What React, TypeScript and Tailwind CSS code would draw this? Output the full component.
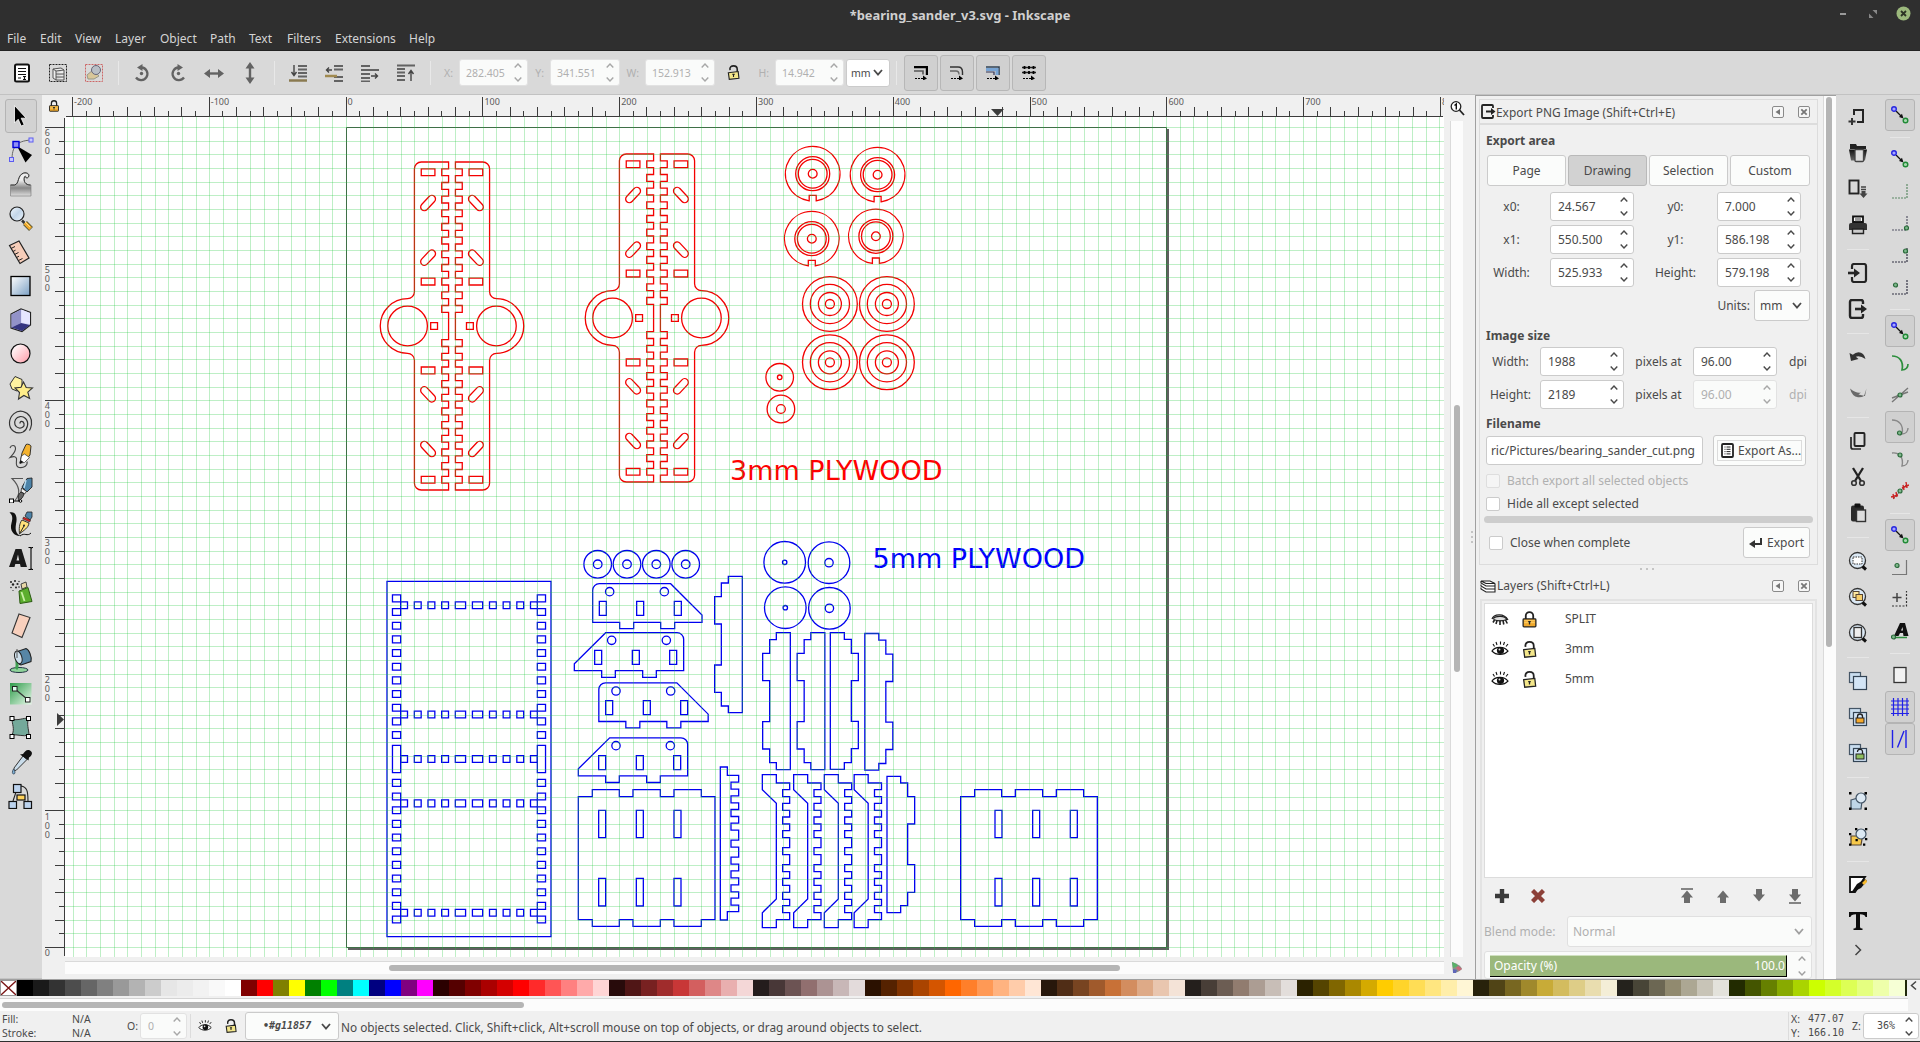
import React from "react";

type Kids = { children?: React.ReactNode };

/* ---------- small helpers ---------- */

function Ic({ w = 20, h, vb, children }: { w?: number; h?: number; vb?: string } & Kids) {
  const hh = h ?? w;
  return (
    <svg width={w} height={hh} viewBox={vb ?? `0 0 ${w} ${hh}`} className="block shrink-0" fill="none">
      {children}
    </svg>
  );
}

const Chev = ({ up = false, c = "#4a4a4a" }: { up?: boolean; c?: string }) => (
  <Ic w={8} h={5}>
    <path d={up ? "M.7 4.500 4 1 7.300 4.500" : "M.7 .5 4 4 7.300 .5"} stroke={c} strokeWidth="1.400" />
  </Ic>
);

const Drop = ({ c = "#4a4a4a" }: { c?: string }) => (
  <Ic w={10} h={7}>
    <path d="M1 1 5 5.600 9 1" stroke={c} strokeWidth="1.800" />
  </Ic>
);

function Spin({ v, cls, off = false, mono = false }: { v: string; cls: string; off?: boolean; mono?: boolean }) {
  const c = off ? "#a8a8a8" : "#4a4a4a";
  return (
    <div
      className={
        "flex shrink-0 items-center justify-between rounded-[3px] border pr-[5px] " +
        cls +
        (off ? " border-[#e2e2e2] bg-[#fafbfa] text-[#b0b0b0]" : " border-[#cbcbcb] bg-white") +
        (mono ? " font-['DejaVu_Sans_Mono'] text-[10px]" : "")
      }
    >
      <span>{v}</span>
      <span className="flex flex-col gap-[9px]">
        <Chev up c={c} />
        <Chev c={c} />
      </span>
    </div>
  );
}

/* ---------- lock and eye glyphs ---------- */

const Lock = ({ open = false, s = 16 }: { open?: boolean; s?: number }) => (
  <Ic w={s} vb="0 0 16 16">
    {open ? (
      <>
        <path d="M4.300 5.500C3.500 2 6 .9 8 .9c2.500 0 4 1.600 4 3.800V8" stroke="#222" strokeWidth="1.700" />
        <path d="M2.500 8.200 13 7l.8 7.200L3.500 15.300z" fill="#f3e68a" stroke="#222" strokeWidth="1.200" />
      </>
    ) : (
      <>
        <path d="M4.500 8V4.500a3.500 3.500 0 0 1 7 0V8" stroke="#222" strokeWidth="1.700" />
        <rect x="2" y="7.500" width="12" height="7.500" rx=".8" fill="#f0a92c" stroke="#222" strokeWidth="1.200" />
        <path d="M3 9.200H13M3 11h10" stroke="#ffd777" strokeWidth=".8" />
      </>
    )}
    <path d="M8 9.300v3.400M6.800 10h2.400" stroke="#222" strokeWidth="1.200" />
  </Ic>
);

const Eye = ({ s = 18 }: { s?: number }) => (
  <Ic w={s} vb="0 0 18 18">
    <path d="M1 11c3-4.500 12-5 16 0-4 4.500-12 4.500-16 0z" fill="#fff" stroke="#111" strokeWidth="1.200" />
    <circle cx="9.500" cy="10.500" r="3.600" fill="#111" />
    <circle cx="8.500" cy="9.500" r="1" fill="#ddd" />
    <path d="M3.500 6.500 2 4M6 5 5 2M9.500 4.500V1.500M12.500 5l1-3M15 6.500 17 4" stroke="#111" strokeWidth="1.100" />
  </Ic>
);

const EyeShut = () => (
  <Ic w={18}>
    <path d="M1 9c1.500-5 12-6.500 16 1" stroke="#222" strokeWidth="1.200" />
    <path d="M2 8.500c3-3 12-3 14 1-4 1.500-10 1.500-13.500 0" fill="#ddd" stroke="#222" strokeWidth="1.200" />
    <path d="M3.500 10 2 12.500M6 10.500 5 14M9 10.500V15M12 10.500l.8 4M14.500 10l1.800 3.500" stroke="#222" strokeWidth="1.600" />
  </Ic>
);

/* ---------- toolbox ---------- */

const toolIcons: React.ReactNode[] = [
  <path d="M6.500 2.500v17.500l3.700-3.700 3 6.700 3-1.300-3-6.500h5z" fill="#000" stroke="#fff" strokeWidth=".8" />,
  <>
    <path d="M4 23C4 10 8 4 23 3" stroke="#666" />
    <path d="M9 9l15 9-6.500 7.500z" fill="#000" />
    <rect x="5" y="4.500" width="6" height="6" fill="#8f8ff5" stroke="#0000d8" strokeWidth="1.400" />
    <rect x="21" y="1" width="4" height="4" fill="#c9c9ff" stroke="#5c5cf0" />
    <rect x="1.500" y="20.500" width="4" height="4" fill="#c9c9ff" stroke="#5c5cf0" />
  </>,
  <>
    <path d="M2.500 14h4c5-.5 2.500-9 8.500-11.500 3-1 6 0 5.500 3-.5 2.500-3 1.500-2.500 0-3 .5-2.500 8.500 3.500 8.500h1.500V25h-20.500z" fill="url(#toolGray)" stroke="#777" strokeWidth=".6" />
    <path d="M2.500 14h4c5-1 2.500-9.500 9-12 4-1 6.500 1.500 5 4-1.500 1.800-4 .3-3-1.200M22.500 14c-5 0-7.500-3.500-6-8.500" stroke="#333" />
  </>,
  <>
    <circle cx="9" cy="9" r="7" fill="url(#toolSky)" stroke="#222" strokeWidth="1.200" />
    <path d="M14 15.500 16.500 18" stroke="#333" strokeWidth="2.500" />
    <path d="m17 18 6 6" stroke="#553" strokeWidth="5.500" />
    <path d="m17 18 5.600 5.600" stroke="#f0a92c" strokeWidth="3.800" />
    <path d="m17 17 5 5" stroke="#ffe08a" strokeWidth="1" />
  </>,
  <>
    <path d="M1.500 6.500 11 2l10 17-9 5.500z" fill="#f6cdb9" stroke="#222" strokeWidth="1.200" />
    <path d="m3 9.500 4-2M5 12.500l2.500-1.300M6.500 15.500l4-2M8.500 18.500l2.500-1.300M10.500 21.500l4-2" stroke="#222" />
  </>,
  <rect x="3" y="3.500" width="19" height="19" fill="url(#toolSteel)" stroke="#000" strokeWidth="1.300" />,
  <>
    <path d="M3 7 13 2l9.500 3.500V18L14 24.500 3 21z" fill="#d4d4f4" stroke="#222" strokeWidth="1.200" />
    <path d="M3.500 7.500 13 2.500V16L3.500 20.500z" fill="#9292c8" />
    <path d="M3.500 20.500 13 16l9 2-8 6z" fill="#353580" />
    <path d="M13.500 2.500 22 6v11l-8.500-1.500z" fill="#e6e6ff" />
  </>,
  <circle cx="12.500" cy="12.500" r="9.500" fill="url(#toolPink)" stroke="#111" strokeWidth="1.200" />,
  <>
    <path d="M2 9 7 1.500l7 3v7L9 16l-5-2z" fill="#fff3a0" stroke="#333" />
    <path d="m15.500 7 2.700 5.500 6.300.5-4.700 4.200 1.800 6.300-5.700-3-5.400 3.500 1-6.500L7 13l6-.7z" fill="#ffee8a" stroke="#333" strokeWidth="1.100" />
  </>,
  <path d="M12 14.500c-.5-2.500 3-3 4 0 .8 3-2 5-5 4.500-4-.8-5.500-5-3.500-8.500 2-3.500 7-4 10-1 4 4 2 11-2.500 13.500C8.500 26 1 21 1.500 13.500 2 6 8.500 1 15 2.500c6 1.500 9.500 7 8.500 13-.5 3-1 4.500-2 6" stroke="#333" strokeWidth="1.200" />,
  <>
    <path d="M2 5c1-3 5-3.500 5.500 0C8 9 4 12 2 14.500c4-1.500 6-1 6.500 1 .5 3-2 8 2.500 9 5 .8 9-2 8-6" stroke="#444" strokeWidth="1.100" />
    <path d="m12 20 2-10 4-8.500c2-1 4.500.5 5 1.500l-1 9-6 7z" fill="#f5b32e" stroke="#222" strokeWidth=".9" />
    <path d="m12 20 1.500-7 3-2 5 3.500-5 5z" fill="#fff" stroke="#333" strokeWidth=".7" />
    <path d="m11.500 21 1-4 3 2z" fill="#111" />
  </>,
  <>
    <path d="M15 1.500H4c8 8 9 15 3 22" stroke="#555" strokeWidth="1.100" />
    <path d="m14 10 5-8.500 5-.5v9l-5 5z" fill="#4c83a8" stroke="#222" strokeWidth=".9" />
    <path d="m18 3-2 8" stroke="#b9dcf0" strokeWidth="1.400" />
    <path d="m13.500 11 5 3.500-2 2.500-3.500-2z" fill="#eee" stroke="#222" strokeWidth=".8" />
    <path d="M13 15c-3 2-3 5-2.500 9 3-2 5-4 5.500-7.500z" fill="#666" stroke="#111" strokeWidth=".8" />
    <rect x="1.500" y="22" width="4" height="4" fill="#fff" stroke="#000" />
    <path d="M5.500 24H11" stroke="#000" />
    <circle cx="12.500" cy="24" r="1.300" fill="#fff" stroke="#000" />
  </>,
  <>
    <path d="M1.500 1.500C7 0 10 5 8 13c-1 6 0 10 5 12-6 1-12-5-9.500-13C5 7 4.500 4 1.500 1.500z" fill="#111" />
    <path d="M12 25c5-4 7 1 11-3" stroke="#111" />
    <path d="m17 5 2-4h5v5l-2 3z" fill="#4c83a8" stroke="#222" strokeWidth=".8" />
    <path d="m15.500 6 7 3-.7 2-7-3z" fill="#d22" stroke="#222" strokeWidth=".6" />
    <path d="m14 9 7 3c-.5 5-5 7-9.500 11-.5-5-.5-10 2.500-14z" fill="#ffe07a" stroke="#222" strokeWidth=".9" />
    <path d="m12 22 4-7" stroke="#222" />
    <circle cx="16" cy="14.500" r="1" fill="#222" />
  </>,
  <>
    <path fillRule="evenodd" d="M1 22 7.500 4h6L19 22h-6.300l-.7-3H7.300l-.8 3zM8.500 15.500h2.700L10 9.500z" fill="#1b1b1b" />
    <path d="M20.500 2.500h2l.7.7.8-.7h1M20.500 24.500h2l.7-.7.8.7h1M23 3.500v20" stroke="#000" strokeWidth="1.100" />
  </>,
  <>
    <g fill="#222">
      <circle cx="3" cy="3" r="1" /><circle cx="7" cy="2" r="1" /><circle cx="5" cy="5.500" r="1.200" /><circle cx="9.500" cy="5" r="1.100" />
      <circle cx="3" cy="8.500" r=".8" /><circle cx="8" cy="8.500" r="1" /><circle cx="11" cy="8" r=".8" /><circle cx="11" cy="2.500" r=".7" /><circle cx="5" cy="11.500" r=".6" />
    </g>
    <path d="m13 5 5-2 1 5-5 2z" fill="#e8d9a8" stroke="#333" strokeWidth=".9" />
    <path d="m11 12 9-3.500 4 14-12 2z" fill="#5cae2e" stroke="#2c5a14" />
    <path d="m13.500 13 3 9" stroke="#c8f0a4" strokeWidth="1.800" />
  </>,
  <path d="m10 1.500 11 3.500-8 20L3 20.500z" fill="#f8d0bd" stroke="#333" strokeWidth="1.100" transform="translate(1 -.5)" />,
  <>
    <ellipse cx="11" cy="23" rx="9" ry="2.500" fill="#8fd39a" stroke="#234" />
    <path d="M8 22c3-3-1-8 2-12" stroke="#3f9f52" strokeWidth="3" />
    <path d="m8 5 10-3.500c3 1 6 8 5 13l-10 3.500c-4-1-6-8-5-13z" fill="#5786a6" stroke="#222" strokeWidth="1.100" />
    <ellipse cx="10.500" cy="10.500" rx="3.500" ry="6.500" transform="rotate(-18 10 11)" fill="#cfe0ec" stroke="#222" />
    <path d="M9 2v9" stroke="#555" />
  </>,
  <>
    <rect x="2" y="2" width="21.500" height="21.500" fill="url(#toolGreen)" />
    <path d="M7 8 19 18" stroke="#333" strokeWidth="1.200" />
    <rect x="4.500" y="5.500" width="4.500" height="4.500" fill="#dfe" stroke="#222" />
    <rect x="17.500" y="16.500" width="4.500" height="4.500" fill="#fff" stroke="#222" />
  </>,
  <>
    <path d="M4 4c5 2 11-1 17-1-3 5 0 12 0 17-6 2-12-1-17 0 3-6 0-11 0-16z" fill="#74a99a" stroke="#333" />
    <g fill="#fff" stroke="#000">
      <rect x="2" y="1.500" width="4" height="4" /><rect x="18.500" y="1.500" width="4" height="4" />
      <rect x="2" y="19.500" width="4" height="4" /><rect x="18.500" y="19.500" width="4" height="4" />
    </g>
  </>,
  <>
    <path d="m6 19 9-12 4 3.500L8.500 21 6 22z" fill="#c9dcea" stroke="#333" />
    <path d="m12 5.500 3-.500C17 2 19 0 22 1.500s2.500 5-1 7l-.5 3z" fill="#111" />
    <path d="M5.500 20c-1.500 2.500-1.500 5 .2 5s1.800-2.500-.2-5z" fill="#7fb2d6" stroke="#345" strokeWidth=".8" />
  </>,
  <>
    <path d="M8 9 5 18M13 3c6 1 7 5 7 15" stroke="#222" strokeWidth="1.100" />
    <rect x="5.500" y="1.500" width="7.500" height="8" fill="#bcd3ee" stroke="#111" strokeWidth="1.200" />
    <rect x="9" y="12" width="8" height="5" fill="#ffd35c" stroke="#111" strokeWidth="1.200" />
    <rect x="1" y="18.500" width="7.500" height="7" fill="#bcd3ee" stroke="#111" strokeWidth="1.200" />
    <rect x="16" y="18.500" width="7.500" height="7" fill="#bcd3ee" stroke="#111" strokeWidth="1.200" />
  </>,
];

const Defs = () => (
  <svg width="0" height="0" className="absolute">
    <defs>
      <linearGradient id="toolGray" x1="0" y1="0" x2="0" y2="1"><stop offset=".3" stopColor="#eee" /><stop offset=".65" stopColor="#888" /><stop offset="1" stopColor="#ddd" /></linearGradient>
      <linearGradient id="toolSky" x1="0" y1="0" x2="1" y2="1"><stop offset="0" stopColor="#f4faff" /><stop offset=".5" stopColor="#c2d5e8" /><stop offset="1" stopColor="#eef5fb" /></linearGradient>
      <linearGradient id="toolSteel" x1="0" y1="0" x2="1" y2="1"><stop offset="0" stopColor="#fff" /><stop offset="1" stopColor="#7ba0c4" /></linearGradient>
      <linearGradient id="toolPink" x1="0" y1="0" x2="1" y2="1"><stop offset=".1" stopColor="#fff" /><stop offset="1" stopColor="#ff9aa6" /></linearGradient>
      <linearGradient id="toolGreen" x1="0" y1="0" x2="1" y2="1"><stop offset="0" stopColor="#2e9c4a" /><stop offset="1" stopColor="#e8f8ea" /></linearGradient>
      <linearGradient id="cmdDark" x1="0" y1="0" x2="0" y2="1"><stop offset="0" stopColor="#111" /><stop offset="1" stopColor="#666" /></linearGradient>
    </defs>
  </svg>
);

const Toolbox = () => (
  <div className="flex w-[42px] shrink-0 flex-col items-center border-b border-[#c4c4c4] bg-[#d9d9d9] pt-1">
    {toolIcons.map((t, i) => (
      <div
        key={i}
        className={
          "flex h-[34px] w-8 shrink-0 items-center justify-center rounded-[3px] " +
          (i === 0 ? "border border-[#b4b4b4] bg-[#d2d2d2]" : "")
        }
      >
        <Ic w={26}>{t}</Ic>
      </div>
    ))}
  </div>
);

/* ---------- top toolbar ---------- */

const G = "#636363";
const stackBar = (k: number) => {
  const bars = [
    <path key="a" d="M9 2h9M9 5.500h9M9 9h9M9 12.500h9" stroke={G} strokeWidth="2.200" />,
    <path key="b" d="M9 2h9M9 5.500h9M9 13h9M9 17h9" stroke={G} strokeWidth="2.200" />,
    <path key="c" d="M0 2h9M0 6h18M0 10h9M0 14h9M0 17.500h9" stroke={G} strokeWidth="2.200" />,
    <path key="d" d="M0 1.500h18M0 5h8M0 8.500h8M0 12h8M0 16h8" stroke={G} strokeWidth="2.200" />,
  ];
  const arrows = [
    <path key="e" d="M5 1v9M2.500 8l2.500 3.500L7.500 8" stroke="#444" strokeWidth="1.400" />,
    <path key="f" d="M7 6H2M4 3.500 1.500 6 4 8.500" stroke="#444" strokeWidth="1.400" />,
    <path key="g" d="M10 12h6M14 9.500l2.500 2.500L14 14.500" stroke="#444" strokeWidth="1.400" />,
    <path key="h" d="M14 17V8M11.500 10 14 6.500l2.500 3.500" stroke="#444" strokeWidth="1.400" />,
  ];
  return (
    <Ic w={18} key={k}>
      {bars[k]}
      {arrows[k]}
      {k === 0 && <path d="M0 16.500h18" stroke="#8a7a50" strokeWidth="2.500" />}
      {k === 1 && <path d="M0 12h12" stroke="#a08a50" strokeWidth="2.500" />}
    </Ic>
  );
};

const topGroups: React.ReactNode[][] = [
  [
    <Ic w={18} h={20}>
      <rect x="2" y="1.500" width="14" height="17" rx="1.500" fill="#fff" stroke="#111" strokeWidth="2" />
      <path d="M5 5.500h8M5 8.500h8M5 11.500h8M5 15h3M10 13.500h3M11.500 13v4M10 16.500h3" stroke="#111" strokeWidth="1.200" />
    </Ic>,
    <Ic w={20}>
      <rect x="1.500" y="1.500" width="17" height="17" stroke="#222" strokeDasharray="2 1" />
      <path d="m5 6 8-1 3 2-8 1zM5 6v9l3 2V8M8 11h8v-4M8 14h8v-3M8 17h8v-3" fill="#eee" stroke="#555" />
    </Ic>,
    <Ic w={20}>
      <rect x="1.500" y="1.500" width="17" height="17" stroke="#c66" strokeDasharray="2 1" />
      <path d="m3 12 6-5 6 6-5 3H4z" fill="#d8c79a" stroke="#998" />
      <circle cx="12" cy="7" r="4.500" fill="#b9bfc6" stroke="#667" />
    </Ic>,
  ],
  [
    <Ic w={18} h={20}>
      <path d="M8.500 4.500a6.300 6.300 0 1 1-5.500 10" stroke={G} strokeWidth="2.300" /><path d="M9.500 1v7L4 4.500z" fill={G} /><circle cx="8.500" cy="10.500" r="1.700" fill={G} />
    </Ic>,
    <Ic w={18} h={20}>
      <path d="M9.500 4.500a6.300 6.300 0 1 0 5.500 10" stroke={G} strokeWidth="2.300" /><path d="M8.500 1v7L14 4.500z" fill={G} /><circle cx="9.500" cy="10.500" r="1.700" fill={G} />
    </Ic>,
    <Ic w={22} h={20}><path d="M4 10.500h14" stroke={G} strokeWidth="2.400" /><path d="M1 10.500 7 6v9zM21 10.500 15 6v9z" fill={G} /></Ic>,
    <Ic w={20} h={22}><path d="M10 4v14" stroke={G} strokeWidth="2.400" /><path d="M10 0l4.500 6.500h-9zM10 22l4.500-6.500h-9z" fill={G} /></Ic>,
  ],
  [stackBar(0), stackBar(1), stackBar(2), stackBar(3)],
];

const VSep = () => <div className="mx-[5.5px] h-6 w-px shrink-0 bg-[#e8e8e8]" />;

const toggleIcons = [
  <Ic w={14}>
    <path d="M0 1h13v8" stroke="#000" strokeWidth="2.400" /><path d="M0 5h9v3.500" stroke="#555" strokeWidth="1.600" /><path d="M1 12.500h8" stroke="#000" strokeDasharray="2 1" /><path d="m9 9.500 4 3-4 2z" fill="#000" />
  </Ic>,
  <Ic w={14}>
    <path d="M0 1h8q4.500 0 4.500 5v3" stroke="#333" strokeWidth="1.400" /><path d="M0 5h6q3 0 3 3.500" stroke="#666" strokeWidth="1.300" /><path d="M1 12.500h8" stroke="#000" strokeDasharray="2 1" /><path d="m9 9.500 4 3-4 2z" fill="#000" />
  </Ic>,
  <Ic w={14}>
    <path d="M0 1h13v8" stroke="#345" strokeWidth="1.600" /><path d="M0 3.500h11V9" stroke="#78a4d4" strokeWidth="3" /><path d="M0 6h8v3" stroke="#335" strokeWidth="1.200" /><path d="M1 12.500h8" stroke="#000" strokeDasharray="2 1" /><path d="m9 9.500 4 3-4 2z" fill="#000" />
  </Ic>,
  <Ic w={14}>
    <path d="M0 1.500h14M0 6.500h14" stroke="#222" strokeWidth="1.300" /><path d="M2.500 0v8M7 0v8M11.500 0v8" stroke="#000" strokeWidth="1.800" strokeDasharray="3 2" /><path d="M1 12.500h8" stroke="#000" strokeDasharray="2 1" /><path d="m9 9.500 4 3-4 2z" fill="#000" />
  </Ic>,
];

const ToolControls = () => (
  <div className="flex h-11 shrink-0 items-center border-b border-[#c2c2c2] bg-[#d9d9d9] pl-1 text-[10.5px] text-[#b0b0b0]">
    {topGroups.map((g, i) => (
      <React.Fragment key={i}>
        {g.map((ic, j) => (
          <div key={j} className="flex w-9 shrink-0 items-center justify-center">{ic}</div>
        ))}
        <VSep />
      </React.Fragment>
    ))}
    <span className="w-[23px] pr-[6px] text-right">X:</span>
    <Spin off v="282.405" cls="h-[27px] w-[69px] pl-[6px]" />
    <span className="w-[22px] pr-[6px] text-right">Y:</span>
    <Spin off v="341.551" cls="h-[27px] w-[70px] pl-[6px]" />
    <span className="w-[25px] pr-[6px] text-right">W:</span>
    <Spin off v="152.913" cls="h-[27px] w-[70px] pl-[6px]" />
    <div className="flex w-9 justify-center"><Lock open s={15} /></div>
    <span className="w-6 pr-[6px] text-right">H:</span>
    <Spin off v="14.942" cls="h-[27px] w-[69px] pl-[6px]" />
    <div className="ml-[2px] flex h-[28px] w-[44px] items-center justify-between rounded-[3px] border border-[#cbcbcb] bg-white pr-[6px] pl-1 text-[#4a4a4a]">
      mm
      <Drop />
    </div>
    <div className="mr-[7px] ml-[6px] h-6 w-px bg-[#e8e8e8]" />
    <div className="flex gap-[2px]">
      {toggleIcons.map((t, i) => (
        <div key={i} className="flex h-9 w-[34px] items-center justify-center rounded-[3px] border border-[#b7b7b7] bg-[#d0d0d0]">{t}</div>
      ))}
    </div>
  </div>
);

/* ---------- canvas drawing ---------- */

const MM = 820 / 600;
const X0 = 346.5;
const Y0 = 127.5;
const px = (v: number) => Math.floor(v) + 0.5;
const range = (a: number, b: number) => Array.from({ length: b - a + 1 }, (_, i) => a + i);

const halfPlate = (() => {
  let d = "M2.5 -120H22.5a5 5 0 0 1 5 5V-25a5 5 0 0 0 5 5A20 20 0 0 1 32.5 20a5 5 0 0 0 -5 5V115a5 5 0 0 1 -5 5H2.5";
  for (let i = 10; i >= 0; i--) d += `V${115 - (10 - i) * 10}H7.5V${110 - (10 - i) * 10}H2.5`;
  for (let i = 0; i < 11; i++) d += `V${-10 - i * 10}H7.5V${-15 - i * 10}H2.5`;
  return d + "Z";
})();

function HalfPlate() {
  const ne = { vectorEffect: "non-scaling-stroke" as const };
  return (
    <g>
      <path d={halfPlate} {...ne} />
      <circle cx="32.5" cy="0" r="14.5" {...ne} />
      <rect x="10.6" y="-2.5" width="5" height="5" {...ne} />
      {[-115, -35, 30, 110].map((y) => <rect key={y} x="12.5" y={y} width="10" height="5" {...ne} />)}
      {[-90, -50, 50, 90].map((y) => (
        <rect key={y} x="-6.7" y="-2.7" width="13.4" height="5.4" rx="2.7" transform={`translate(17.5 ${y}) rotate(${y < 0 ? 47 : -47})`} {...ne} />
      ))}
    </g>
  );
}

const Column = ({ x, y }: { x: number; y: number }) => (
  <g transform={`translate(${x} ${y}) scale(${MM})`}>
    <HalfPlate />
    <g transform="scale(-1 1)"><HalfPlate /></g>
  </g>
);

const Notched = ({ x, y }: { x: number; y: number }) => (
  <g transform={`translate(${x} ${y})`}>
    <path d="M-3.500 27.100A27.300 27.300 0 1 1 3.500 27.100V21.700H-3.500Z" />
    <circle r="17" /><circle r="14.400" /><circle r="4.400" />
  </g>
);

const Rings = ({ x, y, r }: { x: number; y: number; r: number[] }) => (
  <g>{r.map((q) => <circle key={q} cx={x} cy={y} r={q} />)}</g>
);

const rowX = [[10, 5], [20, 5], [30, 5], [40, 5], [50, 7.5], [62.5, 7.5], [75, 5], [85, 5], [95, 5], [105, 5]];

const BasePlate = () => (
  <g transform={`translate(387 581.300) scale(${MM})`}>
    <rect width="120" height="260" vectorEffect="non-scaling-stroke" />
    {[4, 110].map((x) => (
      <g key={x}>
        {range(0, 10).map((i) => (
          <g key={i}>
            <rect x={x} y={10 + i * 10} width="6" height="5" vectorEffect="non-scaling-stroke" />
            <rect x={x} y={145 + i * 10} width="6" height="5" vectorEffect="non-scaling-stroke" />
          </g>
        ))}
        <rect x={x} y="120" width="6" height="20" vectorEffect="non-scaling-stroke" />
      </g>
    ))}
    {[15, 95, 127.5, 160, 240].map((y) =>
      rowX.map(([x, w]) => <rect key={`${x}-${y}`} x={x} y={y} width={w} height="5" vectorEffect="non-scaling-stroke" />),
    )}
  </g>
);

const notchY = [869, 910, 951, 992, 1043, 1094, 1135, 1177, 1217];
const teeth = (out: number, inn: number, dy: number) =>
  notchY.map((y) => `V${y + dy}H${inn}V${y + dy + 21}H${out}`).join("");
const comb = `M667 824H709V849H749${teeth(749, 728, 0)}V1259H709V1283H667V1238L709 1197V910L667 869Z`;
const straightComb = `M541 801H562V826H596${teeth(596, 573, -22.5)}V1235H562V1260H541Z`;
const sideA = "M178 251H392L486 345V367H404V386H362V367H281V386H239V367H158V271a20 20 0 0 1 20 -20Z";
const sideB = "M197 398H411a20 20 0 0 1 20 20V512H349V532H308V512H226V532H185V512H103V491Z";
const tallL = "M709 398H751V809H709V788H689V747H668V665H689V542H668V460H689V419H709Z";
const tallR = "M871 398H913V418H934V460H955V542H934V664H955V746H934V788H913V808H871Z";
const platePath = "M115 890H157V869H238V890H279V869H361V890H402V869H484V890H525V1259H484V1279H402V1259H361V1279H279V1259H238V1279H157V1259H115Z";

const P = ({ d, x = 0, y = 0 }: { d: string; x?: number; y?: number }) => (
  <path d={d} transform={`translate(${x} ${y})`} vectorEffect="non-scaling-stroke" />
);
const Slots = ({ xs, y, h }: { xs: number[]; y: number; h: number }) => (
  <g>{xs.map((x) => <rect key={x} x={x} y={y} width="21" height={h} vectorEffect="non-scaling-stroke" />)}</g>
);
const Holes = ({ xs, y }: { xs: number[]; y: number }) => (
  <g>{xs.map((x) => <circle key={x} cx={x} cy={y} r="12.500" vectorEffect="non-scaling-stroke" />)}</g>
);

const Sheet5 = () => (
  <g stroke="#0000f0" strokeWidth="1.300">
    <BasePlate />
    {[597.7, 627, 656.3, 685.7].map((x) => <Rings key={x} x={x} y={564.3} r={[13.8, 4.3]} />)}
    <Rings x={784.7} y={562.3} r={[20.8, 2.2]} />
    <Rings x={829} y={562.7} r={[20.8, 4.2]} />
    <Rings x={785.3} y={607.7} r={[20.8, 2.2]} />
    <Rings x={829.4} y={608.3} r={[20.8, 4.2]} />
    <g transform="translate(540 500) scale(.33333)">
      <P d={sideA} /><Holes xs={[209, 373]} y={275} /><Slots xs={[178, 290, 403]} y={304} h={42} />
      <P d={sideB} /><Holes xs={[215, 379]} y={421} /><Slots xs={[164, 277, 389]} y={451} h={42} />
      <P d={sideA} x={18.5} y={297.5} /><Holes xs={[228, 392]} y={573} /><Slots xs={[197, 310, 422]} y={602} h={42} />
      <P d={sideB} x={12} y={315.5} /><Holes xs={[228, 391]} y={737} /><Slots xs={[176, 289, 401]} y={767} h={42} />
      <P d="M565 229H607V638H565V618H544V577H524V495H544V372H524V290H544V249H565Z" />
      <P d={platePath} /><Slots xs={[176, 289, 402]} y={931} h={82} /><Slots xs={[176, 289, 402]} y={1135} h={83} />
      <P d={platePath} x={1147} /><Slots xs={[1365, 1478, 1591]} y={931} h={82} /><Slots xs={[1365, 1478, 1591]} y={1135} h={83} />
      <P d={straightComb} />
      <P d={comb} /><P d={comb} x={94} /><P d={comb} x={186} /><P d={comb} x={275.5} />
      <P d="M1041 829H1082V849H1103V890H1124V972H1103V1094H1124V1177H1103V1217H1082V1238H1041Z" />
      <P d={tallL} /><P d={tallL} x={103.5} /><P d={tallR} /><P d={tallR} x={103.5} y={2.5} />
    </g>
  </g>
);

const Sheet3 = () => (
  <g stroke="#f40000" strokeWidth="1.300">
    <Column x={452} y={326} />
    <Column x={657} y={318} />
    <Notched x={812.7} y={173.7} /><Notched x={877.6} y={174.7} /><Notched x={811.8} y={238.7} /><Notched x={875.9} y={236.3} />
    {[[829.9, 304], [886.9, 304], [829.9, 362.3], [886.9, 362.3]].map(([x, y]) => (
      <Rings key={`${x}${y}`} x={x} y={y} r={[27.4, 19.6, 11.5, 4.5]} />
    ))}
    <Rings x={779.7} y={377.3} r={[13.8, 2.3]} />
    <Rings x={780.9} y={409} r={[13.8, 4.4]} />
  </g>
);

const Drawing = () => (
  <svg width="1379" height="840" viewBox="65 117 1379 840" fill="none" className="block bg-white">
    <path d="M1166 129h3v821H348v-3h818z" fill="#606060" />
    <path d="M346.500 947.500V127.500H1166.500V947.500Z" stroke="#4c4c4c" />
    <Sheet3 />
    <Sheet5 />
    <g fontFamily="'DejaVu Sans', sans-serif" fontSize="27">
      <text x="730" y="479.500" fill="#ff0000">3mm PLYWOOD</text>
      <text x="872.500" y="567.500" fill="#0000ff">5mm PLYWOOD</text>
    </g>
    <g stroke="#1ec83a" strokeOpacity=".29" strokeWidth="1">
      {range(-20, 80).map((i) => <path key={i} d={`M${px(X0 + i * 10 * MM)} 117V957`} />)}
      {range(0, 60).map((i) => <path key={i} d={`M65 ${px(Y0 + i * 10 * MM)}H1444`} />)}
    </g>
  </svg>
);

const TopRuler = () => (
  <svg width="1379" height="22" viewBox="65 95 1379 22" className="block" fill="none">
    <path d="M66 116.500H1443" stroke="#3c3c3c" />
    {range(-20, 80).map((i) => {
      const x = px(346 + i * 13.68);
      const top = i % 10 === 0 ? 97 : i % 2 === 0 ? 107 : 111;
      return <path key={i} d={`M${x} ${top}V116`} stroke="#3c3c3c" />;
    })}
    {range(-2, 8).map((i) => (
      <text key={i} x={347.6 + i * 136.8} y="105" fontSize="9" fill="#5a5a5a" fontFamily="'Noto Sans', sans-serif">{i * 100}</text>
    ))}
    <path d="M991 109h13l-6.500 7z" fill="#3c3c3c" />
  </svg>
);

const LeftRuler = () => (
  <svg width="23" height="840" viewBox="42 117 23 840" className="block shrink-0" fill="none">
    <path d="M64.500 118V956" stroke="#3c3c3c" />
    {range(0, 60).map((i) => {
      const y = px(Y0 + i * 10 * MM);
      const l = i % 10 === 0 ? 45 : i % 2 === 0 ? 55 : 59;
      return <path key={i} d={`M${l} ${y}H64`} stroke="#3c3c3c" />;
    })}
    {range(0, 6).map((i) =>
      String(600 - i * 100).split("").map((c, j) => (
        <text key={`${i}-${j}`} x="44.700" y={136 + i * 136.7 + j * 9} fontSize="9" fill="#5a5a5a" fontFamily="'Noto Sans', sans-serif">{c}</text>
      )),
    )}
    <path d="M57 713v13l7-6.500z" fill="#3c3c3c" />
  </svg>
);

const CanvasArea = () => (
  <div className="flex w-[1433px] shrink-0 flex-col bg-[#f0f0f0]">
    <div className="flex h-[22px]">
      <div className="flex w-[23px] items-center justify-center"><Lock s={12} /></div>
      <TopRuler />
      <div className="flex w-7 items-center justify-center pt-1">
        <Ic w={16}>
          <circle cx="6" cy="6.500" r="4.800" fill="#fff" stroke="#222" strokeWidth="1.300" />
          <path d="m9.500 10 4.500 5" stroke="#222" strokeWidth="1.800" /><path d="M4.500 5.500 6.300 4v5.500" stroke="#111" strokeWidth="1.400" />
        </Ic>
      </div>
    </div>
    <div className="flex h-[840px]">
      <LeftRuler />
      <Drawing />
      <div className="mt-1 ml-[6px] flex w-[13px] flex-col items-center border-l border-[#dadada] bg-[#fcfcfc] pt-[284px]">
        <div className="h-[267px] w-[6px] rounded-full bg-[#b5b5b5]" />
      </div>
      <div className="flex w-3 flex-col items-end gap-[3px] pt-[414px] pr-[2px]">
        <i className="size-[2px] bg-[#c4c4c4]" /><i className="size-[2px] bg-[#c4c4c4]" /><i className="size-[2px] bg-[#c4c4c4]" />
      </div>
    </div>
    <div className="flex pl-[23px]">
      <div className="mt-1 h-[13px] w-[1379px] border-t border-[#dadada] bg-[#fcfcfc] pt-[3px] pl-[324px]">
        <div className="h-[6px] w-[731px] rounded-full bg-[#b5b5b5]" />
      </div>
      <div className="pt-[5px] pl-[7px]">
        <Ic w={12}>
          <path d="M1 0q9 3 10 7-4 4-9 4z" fill="#8a8f88" />
          <path d="M1 0q5 2 6 4L2 6z" fill="#57b268" /><path d="M7 4q3 2 4 3L8 9 5 6z" fill="#c96a7a" /><path d="m2 7 4 1-1 3H2z" fill="#5f66b8" />
        </Ic>
      </div>
    </div>
  </div>
);

/* ---------- dock ---------- */

const DockBtn = ({ x = false }: { x?: boolean }) => (
  <Ic w={12}>
    <rect x=".5" y=".5" width="11" height="11" rx="1.500" fill="#f6f6f6" stroke="#8a8a8a" />
    {x ? <path d="m3.300 3.300 5.400 5.400m0-5.400L3.300 8.700" stroke="#777" strokeWidth="1.800" /> : <path d="M8 3v6L3.500 6z" fill="#777" />}
  </Ic>
);

const box = "flex items-center rounded-[3px] border border-[#cbcbcb] bg-[#fbfcfb]";
const btn = box + " justify-center";
const Check = ({ off = false }: { off?: boolean }) => (
  <span className={"size-[14px] shrink-0 rounded-[2px] border " + (off ? "border-[#dedede] bg-[#f5f5f5]" : "border-[#cbcbcb] bg-white")} />
);

const ExportIcon = ({ s = 15 }: { s?: number }) => (
  <Ic w={s} vb="0 0 15 15">
    <path d="M12 4V2q0-1-1-1H2Q1 1 1 2v11q0 1 1 1h9q1 0 1-1v-2" stroke="#222" strokeWidth="1.800" />
    <path d="M5 7.500h6" stroke="#222" strokeWidth="2" /><path d="m10 4 4.500 3.500L10 11z" fill="#222" />
  </Ic>
);

const AreaRow = ({ a, b, c, d }: { a: string; b: string; c: string; d: string }) => (
  <div className="flex h-[29px] items-center">
    <span className="w-[63px] text-center">{a}</span>
    <Spin v={b} cls="ml-[7px] h-[29px] w-[84px] pl-[7px]" />
    <span className="w-[83px] text-center">{c}</span>
    <Spin v={d} cls="h-[29px] w-[84px] pl-[7px]" />
  </div>
);

const SizeRow = ({ a, b, off = false }: { a: string; b: string; off?: boolean }) => (
  <div className="flex h-[29px] items-center">
    <span className="w-[60px] pl-px text-center">{a}</span>
    <Spin v={b} cls="h-[29px] w-[84px] pl-[7px]" />
    <span className="w-[69px] text-center">pixels at</span>
    <Spin v="96.00" off={off} cls="h-[29px] w-[84px] pl-[7px]" />
    <span className={"ml-[12px] " + (off ? "text-[#b0b0b0]" : "")}>dpi</span>
  </div>
);

const ExportPanel = () => (
  <div className="flex h-[466px] w-[339px] flex-col border border-[#dcdcdc]">
    <div className="flex h-[25px] shrink-0 items-center border-b-2 border-[#dcdcdc] pl-px">
      <ExportIcon />
      <span className="text-[11.9px]">Export PNG Image (Shift+Ctrl+E)</span>
      <span className="mr-[7px] ml-auto flex gap-[14px]"><DockBtn /><DockBtn x /></span>
    </div>
    <div className="flex h-[30px] shrink-0 items-center pt-[2px] pl-[6px] font-bold">Export area</div>
    <div className="flex h-[31px] shrink-0 gap-[2px] pl-[7px]">
      <div className={btn + " w-[79px]"}>Page</div>
      <div className="flex w-[79px] items-center justify-center rounded-[3px] border border-[#b9b9b9] bg-[#d2d2d2]">Drawing</div>
      <div className={btn + " w-[79px]"}>Selection</div>
      <div className={btn + " w-20"}>Custom</div>
    </div>
    <div className="mt-[6px] flex flex-col gap-1">
      <AreaRow a="x0:" b="24.567" c="y0:" d="7.000" />
      <AreaRow a="x1:" b="550.500" c="y1:" d="586.198" />
      <AreaRow a="Width:" b="525.933" c="Height:" d="579.198" />
    </div>
    <div className="mt-[3px] flex h-[31px] items-center justify-end gap-1 pr-[7px]">
      Units:
      <div className={box + " h-[31px] w-14 justify-between pr-[7px] pl-[5px]"}>mm<Drop /></div>
    </div>
    <div className="flex h-[26px] items-center pt-1 pl-[6px] font-bold">Image size</div>
    <div className="flex flex-col gap-1">
      <SizeRow a="Width:" b="1988" />
      <SizeRow a="Height:" b="2189" off />
    </div>
    <div className="flex h-[26px] items-center pt-[3px] pl-[6px] font-bold">Filename</div>
    <div className="flex h-[31px] items-center pl-[6px]">
      <div className="flex h-[29px] w-[217px] items-center rounded-[3px] border border-[#cbcbcb] bg-white pr-[7px] pl-[4px]">
        <div className="flex w-full justify-end overflow-hidden whitespace-nowrap">eric/Pictures/bearing_sander_cut.png</div>
      </div>
      <div className={btn + " ml-[10px] h-[31px] w-[93px] p-[3px]"}>
        <div className="flex h-[21px] w-[85px] items-center gap-[4px] overflow-hidden border border-[#dcdcdc] pl-[3px] whitespace-nowrap">
          <Ic w={13} h={15}>
            <rect x="1" y="1" width="11" height="13" rx="1" fill="#fff" stroke="#222" strokeWidth="1.800" />
            <path d="M3.500 4h1m1 0h4m-6 2.300h1m1 0h4m-6 2.300h1m1 0h4m-6 2.300h1m1 0h4" stroke="#222" />
          </Ic>
          Export As...
        </div>
      </div>
    </div>
    <div className="mt-[3px] flex h-[23px] items-center gap-[7px] pl-[6px] text-[#b0b0b0]"><Check off />Batch export all selected objects</div>
    <div className="flex h-[23px] items-center gap-[7px] pl-[6px]"><Check />Hide all except selected</div>
    <div className="mt-px ml-1 h-[7px] w-[329px] shrink-0 rounded-full bg-[#cdcdcd]" />
    <div className="mt-1 flex h-[31px] items-center gap-[7px] pr-[7px] pl-[9px]">
      <Check />Close when complete
      <div className={btn + " ml-auto h-[31px] w-[67px] gap-[5px]"}>
        <Ic w={13} h={12}><path d="M12 1v6H4" stroke="#333" strokeWidth="2" /><path d="M6 3v8L0 7z" fill="#333" /></Ic>
        Export
      </div>
    </div>
  </div>
);

const LayerRow = ({ n, shut = false }: { n: string; shut?: boolean }) => (
  <div className="flex h-[30px] items-center pl-[6px]">
    <span className="w-[30px]">{shut ? <EyeShut /> : <Eye />}</span>
    <span className="w-[44px]"><Lock open={!shut} s={17} /></span>
    {n}
  </div>
);

const Arrow = ({ down = false, bar = false }: { down?: boolean; bar?: boolean }) => (
  <Ic w={14} h={16}>
    <g transform={down ? "rotate(180 7 8)" : undefined}>
      {bar && <path d="M1 1h12" stroke="#555" strokeWidth="1.400" />}
      <path d="M7 2.500 13 9.500H10V15H4V9.500H1z" fill="#6c6c6c" />
    </g>
  </Ic>
);

const LayersPanel = () => (
  <>
    <div className="flex h-[27px] w-[338px] shrink-0 items-center pl-px">
      <Ic w={17} h={14}>
        <path d="M1 2h9l5 2.500H6zM1 2v2l5 3h9V4.500M1 5.500V7l5 3h9V7.500M1 8.500V10l5 3h9v-2.500" fill="#fff" stroke="#222" strokeWidth="1.100" />
      </Ic>
      Layers (Shift+Ctrl+L)
      <span className="mr-[7px] ml-auto flex gap-[14px]"><DockBtn /><DockBtn x /></span>
    </div>
    <div className="ml-px flex h-[380px] w-[337px] flex-col border-2 border-b-0 border-[#e3e3e3] px-[2px] pt-[2px]">
      <div className="h-[275px] shrink-0 border border-[#dcdcdc] bg-white">
        <LayerRow n="SPLIT" shut /><LayerRow n="3mm" /><LayerRow n="5mm" />
      </div>
      <div className="flex h-[38px] shrink-0 items-center pb-[2px] pl-[11px]">
        <Ic w={14}><path d="M7 0v14M0 7h14" stroke="#3a3a3a" strokeWidth="4.400" /></Ic>
        <span className="ml-[22px]"><Ic w={14}><path d="m1.500 1.500 11 11m0-11-11 11" stroke="#8c4038" strokeWidth="4.400" /></Ic></span>
        <span className="mr-[11px] ml-auto flex gap-[22px]"><Arrow bar /><Arrow /><Arrow down /><Arrow down bar /></span>
      </div>
      <div className="flex h-[31px] shrink-0 items-center justify-between text-[#b0b0b0]">
        Blend mode:
        <div className="mr-px flex h-[31px] w-[245px] items-center justify-between rounded-[3px] border border-[#e0e0e0] bg-[#fafbfa] pr-[7px] pl-[5px]">Normal<Drop c="#a0a0a0" /></div>
      </div>
      <div className="mt-[4px] mr-px flex h-9 items-start rounded-[3px] border border-[#e0e0e0] bg-[#fafbfa] pt-[3px] pl-[5px]">
        <div className="flex h-[22px] w-[297px] items-center justify-between border-t border-r border-b border-t-[#cfe0bf] border-r-black border-b-black bg-[#9bb87c] pr-px pl-1 text-white">
          <span>Opacity (%)</span><span>100.0</span>
        </div>
        <span className="mt-[1px] ml-[11px] flex flex-col gap-[10px]"><Chev up c="#a0a0a0" /><Chev c="#a0a0a0" /></span>
      </div>
    </div>
  </>
);

const Dock = () => (
  <div className="flex w-[361px] shrink-0 overflow-hidden border-t border-l border-[#a0a0a0] bg-[#f0f0f0]">
    <div className="flex w-[347px] flex-col pt-[3px] pl-[3px]">
      <ExportPanel />
      <div className="flex h-[7px] shrink-0 items-center justify-center gap-1 pr-2">
        <i className="size-[2px] bg-[#c4c4c4]" /><i className="size-[2px] bg-[#c4c4c4]" /><i className="size-[2px] bg-[#c4c4c4]" />
      </div>
      <LayersPanel />
    </div>
    <div className="flex w-[13px] shrink-0 flex-col items-center border-l border-[#dadada] bg-[#fcfcfc] pt-px pr-[2px]">
      <div className="h-[550px] w-[6px] rounded-full bg-[#b5b5b5]" />
    </div>
  </div>
);

/* ---------- command and snap bars ---------- */

const K = "#242424";
const Zoomer = ({ children }: Kids) => (
  <Ic w={20}>
    <circle cx="9.500" cy="9.500" r="8" fill="#dbe9f5" stroke="#333" strokeWidth="1.300" />
    <path d="m14.500 15.500 3.500 3" stroke="#111" strokeWidth="3" />
    {children}
  </Ic>
);
const TwoSq = ({ children }: Kids) => (
  <Ic w={20}>
    <rect x="1.500" y="1.500" width="11" height="10" fill="#c9ddef" stroke="#456" strokeWidth="1.200" />
    <rect x="5.500" y="5.500" width="13" height="13" fill="#d3e5f6" stroke="#345" strokeWidth="1.200" />
    {children}
  </Ic>
);

const cmds: (React.ReactNode | null)[] = [
  <Ic w={20}><path d="M6 8V3h9v12H9" stroke={K} strokeWidth="2" /><path d="M4 11v7M.5 14.500h7" stroke="#333" strokeWidth="2" /></Ic>,
  <Ic w={20}><path d="M2 1h6l1 2h9v3H2z" fill="#222" /><path d="M1 6.500h18l-2 11H3z" fill="url(#cmdDark)" /><rect x="7" y="6.500" width="8.500" height="12" fill="#ddd" stroke="#444" strokeWidth="1.300" rx="1" /></Ic>,
  <Ic w={20}><rect x="1.500" y="1.500" width="9" height="13" stroke={K} strokeWidth="1.900" /><path d="M13 8h5M13 10.500h5" stroke="#444" strokeWidth="1.300" /><path d="M13.500 12h4v2.500h2L15.500 19l-4-4.500h2z" fill="#444" /></Ic>,
  <Ic w={20}><path d="M5 1.500h10V7H5z" fill="#fff" stroke="#111" strokeWidth="1.800" /><path d="M7 4h6M7 6h6" stroke="#333" /><path d="M3 8h14q2 0 2 2v5H1v-5q0-2 2-2z" fill="#333" /><path d="M4.500 14h11v4.500h-11z" fill="#ccc" stroke="#222" strokeWidth="1.400" /></Ic>,
  null,
  <Ic w={20}><path d="M4 6V3q0-2 2-2h10q2 0 2 2v14q0 2-2 2H6q-2 0-2-2v-3" stroke={K} strokeWidth="2.200" /><path d="M0 10h7" stroke={K} strokeWidth="2.600" /><path d="m6 5.500 6 4.500-6 4.500z" fill={K} /></Ic>,
  <Ic w={20}><path d="M15 5V3q0-2-2-2H4Q2 1 2 3v14q0 2 2 2h9q2 0 2-2v-2" stroke={K} strokeWidth="2.400" /><path d="M7 10h7" stroke={K} strokeWidth="2.600" /><path d="m13 5.500 6 4.500-6 4.500z" fill={K} /></Ic>,
  null,
  <Ic w={20}><path d="M1.500 6 3 14l7.500-2-2.700-2.300q4-1.700 9.700 2.300Q16 5.500 10.500 5.300 7.500 5.300 4.800 7.800z" fill="#333" /></Ic>,
  <Ic w={20}><path d="m18.500 5.500-1.500 7.500-6.500-1.500 2.500-2Q9 11 2 5.500 4 13.500 10 14.200q4 .300 6-1.200z" fill="#6a6a6a" /></Ic>,
  null,
  <Ic w={20}><path d="M3 6v10q0 2 2 2h8" stroke={K} strokeWidth="1.700" /><rect x="6.500" y="2" width="10" height="13" rx="1" fill="#ddd" stroke={K} strokeWidth="1.900" /></Ic>,
  <Ic w={20}><path d="m5 1 8 13M15 1 7 14" stroke="#222" strokeWidth="2.300" /><circle cx="6" cy="16" r="2.300" stroke="#333" strokeWidth="1.600" /><circle cx="14" cy="16" r="2.300" stroke="#333" strokeWidth="1.600" /></Ic>,
  <Ic w={20}><rect x="3" y="2.500" width="13" height="16" rx="2" fill="#2a2a2a" /><rect x="6.500" y=".5" width="6" height="4" rx="1" fill="#111" /><rect x="8.500" y="7" width="9" height="11.500" fill="#ddd" stroke="#333" strokeWidth="1.400" /></Ic>,
  null,
  <Zoomer><rect x="5" y="6" width="9" height="7" fill="#fff" stroke="#333" strokeDasharray="1.500 1" /></Zoomer>,
  <Zoomer><rect x="5" y="4.500" width="6" height="6" fill="#ffe9a0" stroke="#543" /><rect x="8" y="7.500" width="6.500" height="6" fill="#f6ce6a" stroke="#543" /></Zoomer>,
  <Zoomer><rect x="6" y="4.500" width="7.500" height="10" fill="#eee" stroke="#333" strokeWidth="1.300" /></Zoomer>,
  null,
  <TwoSq />,
  <TwoSq><path d="M9.500 11V9.500a2.500 2.500 0 0 1 5 0V11" stroke="#222" strokeWidth="1.300" /><rect x="8" y="11" width="8" height="5" fill="#f6a92c" stroke="#222" /></TwoSq>,
  <TwoSq><path d="M9.500 9a2.500 2.500 0 0 1 5-.5V11" stroke="#222" strokeWidth="1.300" /><rect x="8" y="11" width="8" height="5" fill="#8fbf5f" stroke="#222" /></TwoSq>,
  null,
  <Ic w={20}><path d="m3 9 7-2 4 3-1 8H3z" fill="#bfd6e8" stroke="#456" strokeWidth="1.200" /><circle cx="13" cy="7" r="5" fill="#dce9f4" stroke="#456" strokeWidth="1.200" /><path d="M1 1h2.500v2.500H1zM16.500 1H19v2.500h-2.500zM1 16.500h2.500V19H1zM16.500 16.500H19V19h-2.500z" fill="#000" /></Ic>,
  <Ic w={20}><path d="M3 9h7l4 3-1 6H3z" fill="#f6c84a" stroke="#543" strokeWidth="1.200" /><circle cx="13" cy="7" r="5" fill="#dce9f4" stroke="#456" strokeWidth="1.200" /><path d="M1 6h2.300v2.300H1zM7 1h2.300v2.300H7zM17 1h2.300v2.300H17zM1 16.500h2.300v2.300H1zM15 16.500h2.300v2.300H15zM17 11h2.300v2.300H17zM7.500 12h2.300v2.300H7.500z" fill="#000" /></Ic>,
  null,
  <Ic w={20}><path d="M2 2h15L7 17H2z" fill="#fff" stroke="#111" strokeWidth="1.800" /><path d="M3 18 9 9l8-5 2 2-6 7z" fill="#111" /><path d="m14 8 4-4 1 3-3 3z" fill="#f6b92c" /></Ic>,
  <Ic w={20}><path d="M1 1h18v5h-1.500Q17 3.300 12 3.300V16q0 1.500 2.500 1.500V19h-9v-1.500Q8 17.500 8 16V3.300Q3 3.300 2.500 6H1z" fill="#0c0c0c" /></Ic>,
];

const SnapLink = () => (
  <Ic w={18} h={20}>
    <path d="m5 6 6 6" stroke="#111" strokeWidth="1.300" /><path d="m12.500 13.500-4.500-1.500 3-3.200z" fill="#111" />
    <circle cx="3" cy="4" r="2.300" fill="#a8a8ff" stroke="#2626e0" strokeWidth="1.400" />
    <circle cx="14.500" cy="15.500" r="2.300" fill="#a8d8b0" stroke="#1f8a35" strokeWidth="1.400" />
  </Ic>
);
const gd = (x: number, y: number) => <circle cx={x} cy={y} r="2" fill="#7fb88c" stroke="#2b6b3b" strokeWidth="1.200" />;
const corner = (c: string, dot?: React.ReactNode) => (
  <Ic w={18} h={20}><path d="M1 17h15V2" stroke={c} strokeWidth="1.200" strokeDasharray="2 1" />{dot}</Ic>
);

const snaps: ({ on?: boolean; i: React.ReactNode } | null)[] = [
  { on: true, i: <SnapLink /> },
  null,
  { i: <SnapLink /> },
  { i: corner("#5c8a66") },
  { i: corner("#556", gd(15.5, 15)) },
  { i: corner("#334", gd(14.5, 6)) },
  { i: corner("#334", gd(4.5, 8)) },
  null,
  { on: true, i: <SnapLink /> },
  { i: <Ic w={18} h={20}><path d="M1 3c7 0 12 5 10 14 4 0 6-3 6-6" stroke="#2d8f3d" strokeWidth="1.700" /></Ic> },
  { i: <Ic w={18} h={20}><path d="M1 17 17 3M1 13 17 7" stroke="#777" strokeWidth="1.400" />{gd(9, 10)}</Ic> },
  { on: true, i: <Ic w={18} h={20}><path d="M1 3c7 0 12 5 10 14 4 0 6-3 6-6" stroke="#888" strokeWidth="1.400" />{gd(8.5, 16)}</Ic> },
  { i: <Ic w={18} h={20}><path d="M1 4c7-1 12 4 10 13 4 0 6-3 6-6" stroke="#888" strokeWidth="1.400" />{gd(9, 6)}</Ic> },
  { i: <Ic w={18} h={20}><path d="m2 18 14-15" stroke="#666" /><path d="m2 13 1 5M5 11l1 5M0 16l7-2M12 4l1 5M15 1l1 6M11 7l7-3" stroke="#c22" strokeWidth="1.400" />{gd(9, 10)}</Ic> },
  null,
  { on: true, i: <SnapLink /> },
  { i: <Ic w={18} h={20}><path d="M1 17.500h14.500V3" stroke="#777" strokeWidth="1.200" />{gd(6, 8.500)}</Ic> },
  { i: <Ic w={18} h={20}><path d="M1 17h14.500V2" stroke="#333" strokeWidth="1.200" strokeDasharray="2 1.500" /><path d="M6 4v9M1.500 8.500h9" stroke="#444" strokeWidth="1.500" /></Ic> },
  { i: <Ic w={18} h={20}><path fillRule="evenodd" d="m3 15 6-13h5l3.500 13h-5l-.5-3H9l-1.500 3zM10 9.500h2L11.500 6z" fill="#111" /><path d="M2 16.500h14" stroke="#2d8f3d" strokeWidth="1.500" />{gd(2.500, 16)}</Ic> },
  null,
  { i: <Ic w={18} h={20}><rect x="3" y="2.500" width="12" height="15" fill="#f2f2f2" stroke="#333" strokeWidth="1.300" /></Ic> },
  { on: true, i: <Ic w={18}><path d="M2.500 0v18M7 0v18M11.500 0v18M16 0v18M0 3h18M0 7h18M0 11h18M0 15.500h18" stroke="#2020e8" strokeWidth="1.200" /></Ic> },
  { on: true, i: <Ic w={18}><path d="M1.500 0v18M15 0v18M6.500 17.500 13 1" stroke="#2020e8" strokeWidth="1.400" /></Ic> },
];

const SideBars = () => (
  <div className="flex w-[84px] shrink-0 border-b border-[#c4c4c4] bg-[#d9d9d9] pt-1">
    <div className="flex w-[44px] flex-col items-center">
      {cmds.map((c, i) =>
        c === null ? (
          <div key={i} className="my-[5.5px] h-px w-[22px] shrink-0 bg-[#e6e6e6]" />
        ) : (
          <div key={i} className="flex h-9 shrink-0 items-center justify-center">{c}</div>
        ),
      )}
      <div className="pt-[5px]"><Ic w={8} h={12}><path d="m1.500 1 5 5-5 5" stroke="#444" strokeWidth="1.500" /></Ic></div>
    </div>
    <div className="flex w-10 flex-col items-center">
      {snaps.map((s, i) =>
        s === null ? (
          <div key={i} className="my-[5.5px] h-px w-5 shrink-0 bg-[#e6e6e6]" />
        ) : (
          <div key={i} className={"flex h-8 w-[30px] shrink-0 items-center justify-center rounded-[3px] " + (s.on ? "border border-[#b4b4b4] bg-[#d0d0d0]" : "")}>{s.i}</div>
        ),
      )}
    </div>
  </div>
);

/* ---------- palette and status ---------- */

const palette = (
  "000000 1a1a1a 333333 4d4d4d 666666 808080 999999 b3b3b3 cccccc e6e6e6 ececec f2f2f2 f9f9f9 ffffff " +
  "800000 ff0000 808000 ffff00 008000 00ff00 008080 00ffff 000080 0000ff 800080 ff00ff " +
  "2b0000 550000 800000 aa0000 d40000 ff0000 ff2a2a ff5555 ff8080 ffaaaa ffd5d5 " +
  "280b0b 501616 782121 a02c2c c83737 d35f5f de8787 e9afaf f4d7d7 " +
  "241c1c 483737 6c5353 916f6f ac9393 c8b7b7 e3dbdb " +
  "2b1100 552200 803300 aa4400 d45500 ff6600 ff7f2a ff9955 ffb380 ffccaa ffe6d5 " +
  "28170b 502d16 784421 a05a2c c87137 d38d5f deaa87 e9c6af f4e3d7 " +
  "241f1c 483e37 6c5d53 917c6f ac9d93 c8beb7 e3dedb " +
  "2b2200 554400 806600 aa8800 d4aa00 ffcc00 ffd42a ffdd55 ffe680 ffeeaa fff6d5 " +
  "28220b 504416 786721 a0892c c8ab37 d3bc5f decd87 e9ddaf f4eed7 " +
  "24221c 484537 6c6753 918a6f aca793 c8c4b7 e3e2db " +
  "222b00 445500 668000 88aa00 aad400 ccff00 d4ff2a ddff55 e5ff80 eeffaa f6ffd5"
).split(" ");

const Palette = () => (
  <div className="h-[32px] shrink-0 border-t border-[#a0a0a0] bg-[#f0f0f0]">
    <div className="flex h-4">
      <div className="h-4 w-[17px] shrink-0 border border-[#999] bg-white">
        <Ic w={15} h={14}><path d="m0 0 15 14M15 0 0 14" stroke="#7a1515" strokeWidth="1.300" /></Ic>
      </div>
      {palette.map((c, i) => <div key={i} className="h-4 w-4 shrink-0" style={{ backgroundColor: "#" + c }} />)}
      <div className="h-4 w-[2px] bg-[#20280b]" />
      <div className="flex flex-1 justify-center"><Ic w={7} h={11}><path d="m6 1.500-4.500 4 4.500 4" stroke="#444" strokeWidth="1.500" /></Ic></div>
    </div>
    <div className="mt-[2px] h-[13px] w-[1908px] border-t border-[#d4d4d4] bg-[#fcfcfc] pt-[3px] pl-[2px]">
      <div className="h-[6px] w-[522px] rounded-full bg-[#b5b5b5]" />
    </div>
  </div>
);

const StatusBar = () => (
  <div className="flex h-[31px] shrink-0 items-center border-b border-[#2f2f2f] bg-[#f0f0f0]">
    <div className="w-[70px] pl-[2px] text-[10.5px] leading-[14px]">Fill:<br />Stroke:</div>
    <div className="w-[57px] pl-[2px] text-[10.5px] leading-[14px]">N/A<br />N/A</div>
    <span className="w-[13px] text-[10.5px]">O:</span>
    <Spin off v="0" cls="h-[26px] w-[47px] pl-[7px] text-[10.5px]" />
    <div className="mx-[3px] h-6 w-px bg-[#dcdcdc]" />
    <div className="ml-[4px] w-[26px]"><Eye s={14} /></div>
    <div className="w-[21px]"><Lock open s={14} /></div>
    <div className={box + " h-[28px] w-[94px] justify-between pr-[7px] pl-[17px] font-['DejaVu_Sans_Mono'] text-[10px] font-bold italic"}>
      •#g11857<Drop />
    </div>
    <span className="ml-[2px] pt-px text-[11.8px] whitespace-nowrap">
      No objects selected. Click, Shift+click, Alt+scroll mouse on top of objects, or drag around objects to select.
    </span>
    <div className="ml-auto flex h-[28px] items-center border-l border-[#dcdcdc] pl-[2px]">
      <div className="w-[17px] text-[10.5px] leading-[14px]">X:<br />Y:</div>
      <div className="w-[44px] font-['DejaVu_Sans_Mono'] text-[10px] leading-[14px]">477.07<br />166.10</div>
      <span className="w-[11px] text-[10.5px]">Z:</span>
      <Spin mono v="36%" cls="mr-px h-[26px] w-[56px] pl-[13px]" />
    </div>
  </div>
);

/* ---------- window ---------- */

const menu: [string, string][] = [
  ["File", "w-[33px]"], ["Edit", "w-[35px]"], ["View", "w-10"], ["Layer", "w-[45px]"], ["Object", "w-[50px]"],
  ["Path", "w-[39px]"], ["Text", "w-[38px]"], ["Filters", "w-12"], ["Extensions", "w-[74px]"], ["Help", "w-10"],
];

export default function App() {
  return (
    <div className="flex h-[1042px] w-[1920px] flex-col overflow-hidden bg-[#f0f0f0] font-['Noto_Sans','Open_Sans',sans-serif] text-[12px] leading-4 text-[#4a4a4a]">
      <Defs />
      <div className="flex h-[27px] shrink-0 items-center bg-[#2f2f2f]">
        <div className="w-[80px]" />
        <div className="flex-1 pt-[2px] text-center text-[12.9px] font-bold text-[#d0d0d0]">*bearing_sander_v3.svg - Inkscape</div>
        <div className="flex w-[80px] items-center">
          <i className="h-[2px] w-[6px] bg-[#999]" />
          <span className="ml-[23px]"><Ic w={8}><path d="M3.500 0H8v4.500zM4.500 8H0V3.500z" fill="#888" /></Ic></span>
          <span className="ml-[19px]">
            <Ic w={15}>
              <circle cx="7.500" cy="7.500" r="7" fill="#9bb87c" /><path d="m5 5 5 5m0-5-5 5" stroke="#2b3324" strokeWidth="1.800" />
            </Ic>
          </span>
        </div>
      </div>
      <div className="flex h-6 shrink-0 items-center border-b border-[#222] bg-[#2f2f2f] pl-[7px] text-[#d4d4d4]">
        {menu.map(([m, w]) => <span key={m} className={w}>{m}</span>)}
      </div>
      <ToolControls />
      <div className="flex h-[884px] shrink-0">
        <Toolbox />
        <CanvasArea />
        <Dock />
        <SideBars />
      </div>
      <Palette />
      <StatusBar />
    </div>
  );
}
